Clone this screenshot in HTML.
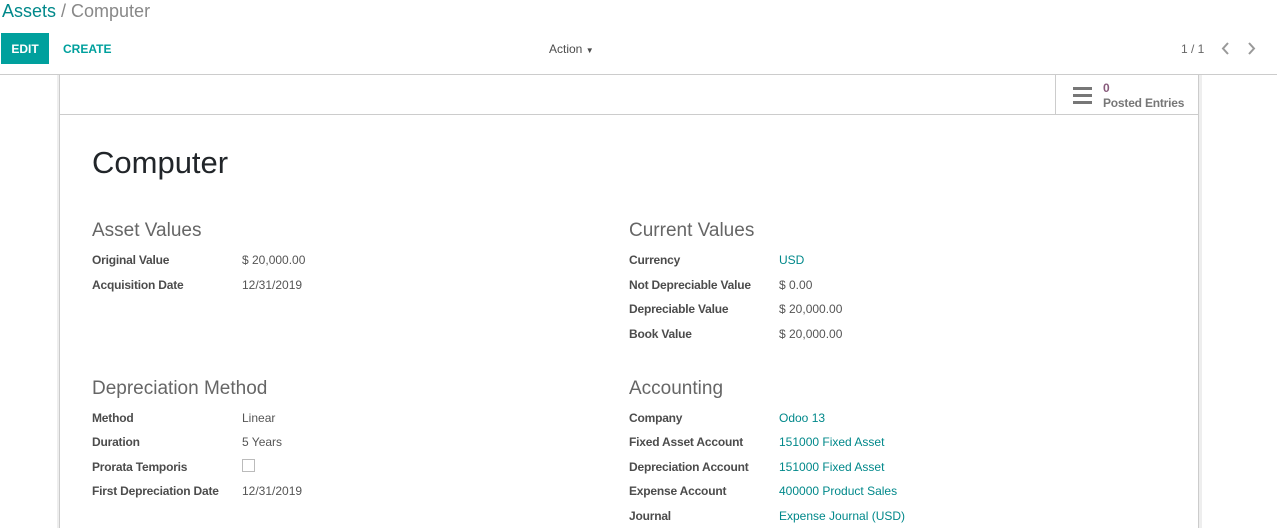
<!DOCTYPE html>
<html><head><style>
body{margin:0;width:1277px;height:528px;overflow:hidden;background:#fff;font-family:"Liberation Sans",sans-serif;color:#4c4c4c;position:relative}
.a{position:absolute;white-space:nowrap}
.l{font-size:12px;font-weight:bold;color:#4c4c4c;letter-spacing:-0.2px}
.v{font-size:12px;color:#555}
.k{font-size:12px;color:#00888a}
.h{font-size:19px;color:#666}
</style></head><body>
<div class="a" style="left:2px;top:1px;font-size:18px;"><span style="color:#00888a">Assets</span><span style="color:#888"> / Computer</span></div>
<div class="a" style="left:1px;top:33px;width:48px;height:31px;background:#00a09d;color:#fff;font-size:12px;font-weight:bold;text-align:center;line-height:32px">EDIT</div>
<div class="a" style="left:63px;top:42px;font-size:12px;font-weight:bold;color:#00a09d">CREATE</div>
<div class="a" style="left:549px;top:42px;font-size:12px;color:#4c4c4c">Action <span style="font-size:8px">▼</span></div>
<div class="a" style="left:1181px;top:42px;font-size:12px;color:#666">1 / 1</div>
<svg class="a" style="left:1220px;top:42px" width="40" height="13"><path d="M8 1 L3 6.5 L8 12 M29 1 L34 6.5 L29 12" fill="none" stroke="#999" stroke-width="2"/></svg>
<div class="a" style="left:0;top:74px;width:1277px;height:1px;background:#ccc"></div>
<div class="a" style="left:57px;top:75px;width:3px;height:453px;background:#eee"></div>
<div class="a" style="left:59px;top:75px;width:1px;height:453px;background:#ccc"></div>
<div class="a" style="left:1198px;top:75px;width:1px;height:453px;background:#ccc"></div>
<div class="a" style="left:1199px;top:75px;width:3px;height:453px;background:#eee"></div>
<div class="a" style="left:60px;top:114px;width:1138px;height:1px;background:#ccc"></div>
<div class="a" style="left:1055px;top:75px;width:1px;height:39px;background:#ccc"></div>
<svg class="a" style="left:1073px;top:87px" width="20" height="17"><rect y="0" width="19" height="3" fill="#777"/><rect y="7" width="19" height="3" fill="#777"/><rect y="14" width="19" height="3" fill="#777"/></svg>
<div class="a" style="left:1103px;top:81px;font-size:12px;font-weight:bold;color:#875a7b">0</div>
<div class="a" style="left:1103px;top:96px;font-size:12px;font-weight:bold;color:#777;letter-spacing:-0.2px">Posted Entries</div>
<div class="a" style="left:92px;top:145px;font-size:31px;color:#212529">Computer</div>
<div class="a h" style="left:92px;top:220px">Asset Values</div>
<div class="a l" style="left:92px;top:253px">Original Value</div><div class="a v" style="left:242px;top:253px">$ 20,000.00</div>
<div class="a l" style="left:92px;top:278px">Acquisition Date</div><div class="a v" style="left:242px;top:278px">12/31/2019</div>
<div class="a h" style="left:629px;top:220px">Current Values</div>
<div class="a l" style="left:629px;top:253px">Currency</div><div class="a k" style="left:779px;top:253px">USD</div>
<div class="a l" style="left:629px;top:278px">Not Depreciable Value</div><div class="a v" style="left:779px;top:278px">$ 0.00</div>
<div class="a l" style="left:629px;top:302px">Depreciable Value</div><div class="a v" style="left:779px;top:302px">$ 20,000.00</div>
<div class="a l" style="left:629px;top:327px">Book Value</div><div class="a v" style="left:779px;top:327px">$ 20,000.00</div>
<div class="a h" style="left:92px;top:378px">Depreciation Method</div>
<div class="a l" style="left:92px;top:411px">Method</div><div class="a v" style="left:242px;top:411px">Linear</div>
<div class="a l" style="left:92px;top:435px">Duration</div><div class="a v" style="left:242px;top:435px">5 Years</div>
<div class="a l" style="left:92px;top:460px">Prorata Temporis</div><div class="a" style="left:242px;top:459px;width:11px;height:11px;border:1px solid #bbb"></div>
<div class="a l" style="left:92px;top:484px">First Depreciation Date</div><div class="a v" style="left:242px;top:484px">12/31/2019</div>
<div class="a h" style="left:629px;top:378px">Accounting</div>
<div class="a l" style="left:629px;top:411px">Company</div><div class="a k" style="left:779px;top:411px">Odoo 13</div>
<div class="a l" style="left:629px;top:435px">Fixed Asset Account</div><div class="a k" style="left:779px;top:435px">151000 Fixed Asset</div>
<div class="a l" style="left:629px;top:460px">Depreciation Account</div><div class="a k" style="left:779px;top:460px">151000 Fixed Asset</div>
<div class="a l" style="left:629px;top:484px">Expense Account</div><div class="a k" style="left:779px;top:484px">400000 Product Sales</div>
<div class="a l" style="left:629px;top:509px">Journal</div><div class="a k" style="left:779px;top:509px">Expense Journal (USD)</div>
</body></html>
